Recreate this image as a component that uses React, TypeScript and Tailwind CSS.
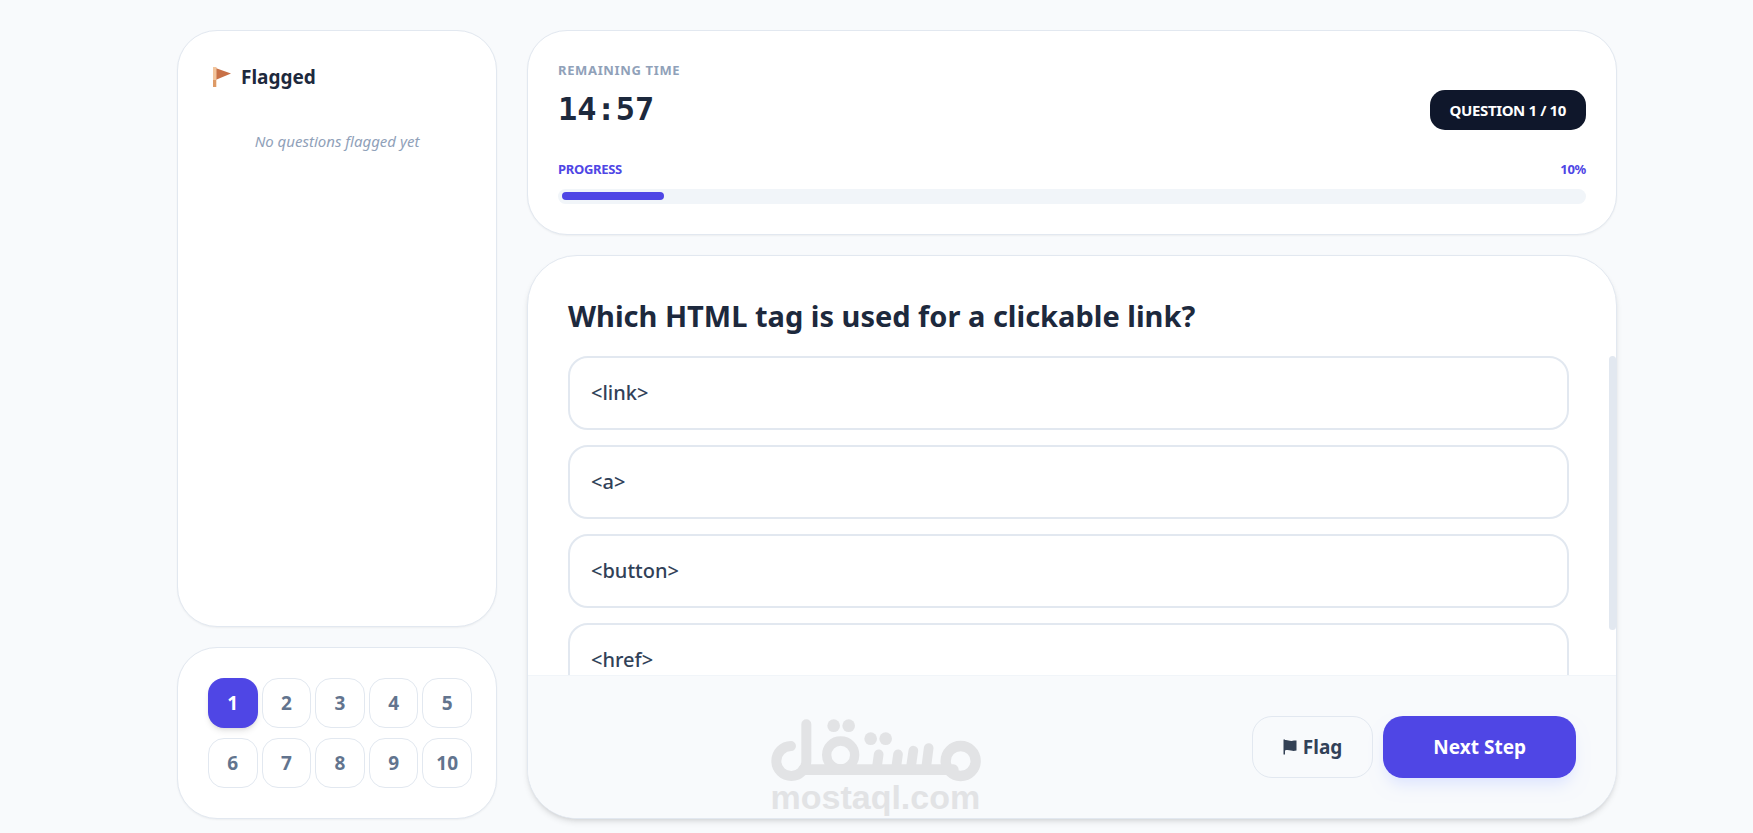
import React, { useState } from 'react';

const options = ['<link>', '<a>', '<button>', '<href>'];
const questionNumbers = [1, 2, 3, 4, 5, 6, 7, 8, 9, 10];

const PennantIcon = () => (
  <svg viewBox="0 0 20 22" className="h-[22px] w-5" aria-hidden="true">
    <path d="M3.5 2 L19 7.5 L3.5 14 Z" fill="#c87147" />
    <rect x="1" y="1" width="3.5" height="20" fill="#f2c49b" />
    <rect x="1" y="14" width="3" height="7" fill="#dd9a66" />
  </svg>
);

const FlagIcon = () => (
  <svg viewBox="0 0 14 16" className="h-4 w-3.5" aria-hidden="true">
    <path d="M0.5 0.5 H2 V1 C4.5 0.6 6 2 8.5 1.9 C10.5 1.8 11.5 1.6 13.5 1.6 V11.5 C11.5 12 10 12 8 11.6 C6 11.2 4.5 10.8 2 11.4 V15.5 H0.5 Z" fill="#334155" />
  </svg>
);

const Watermark = () => (
  <div className="pointer-events-none absolute bottom-[21px] left-1/2 flex w-[212px] -translate-x-1/2 flex-col text-[#e2e3e5]">
    <svg viewBox="93 86 630 189" className="h-[63px] w-[210px]" fill="none" stroke="currentColor" strokeLinecap="round" role="img" aria-label="مستقل">
      <path d="M153 167 A45 45 0 1 0 199 212 V102" strokeWidth="30" />
      <path d="M190 238 H640" strokeWidth="32" />
      <circle cx="302" cy="194" r="42" strokeWidth="28" />
      <circle cx="662" cy="212" r="45" strokeWidth="31" />
      <path d="M416 192 L410 236 M474 192 L468 236 M520 181 L512 236 M566 173 L558 236" strokeWidth="29" />
      <g fill="currentColor" stroke="none">
        <circle cx="281" cy="106" r="19" />
        <circle cx="326" cy="106" r="19" />
        <circle cx="392" cy="145" r="19" />
        <circle cx="437" cy="145" r="19" />
      </g>
    </svg>
    <span className="font-['Liberation_Sans',sans-serif] text-[34px] leading-[30px] font-bold">mostaql.com</span>
  </div>
);

const App = () => {
  const [current, setCurrent] = useState(1);
  const progress = current * 10;

  return (
    <div className="relative h-screen overflow-hidden bg-slate-50 pt-[30px] pr-4 pb-3.5 pl-[57px] font-['Noto_Sans',sans-serif] text-slate-800">
      <div className="mx-auto flex h-full max-w-[1440px] gap-[30px]">
        {/* Sidebar */}
        <aside className="flex w-80 shrink-0 flex-col gap-5">
          <section className="flex-1 rounded-[40px] border border-slate-200 bg-white p-[30px] shadow-xs">
            <h2 className="flex items-center gap-[9px] pl-1 text-[19px] leading-8 font-bold">
              <PennantIcon />
              Flagged
            </h2>
            <p className="mt-[38px] text-center text-[15px] leading-5 text-slate-400 italic">No questions flagged yet</p>
          </section>

          <nav className="grid grid-cols-5 gap-x-1 gap-y-2.5 rounded-[40px] border border-slate-200 bg-white py-[30px] pr-6 pl-[30px] shadow-xs">
            {questionNumbers.map((n) => (
              <button
                key={n}
                type="button"
                onClick={() => setCurrent(n)}
                className={
                  n === current
                    ? 'h-[50px] rounded-2xl bg-[#4f46e5] text-[19px] font-bold text-white shadow-md'
                    : 'h-[50px] rounded-2xl border border-slate-200 bg-white text-[19px] font-bold text-slate-500'
                }
              >
                {n}
              </button>
            ))}
          </nav>
        </aside>

        <main className="flex min-w-0 flex-1 flex-col gap-5">
          {/* Timer and progress */}
          <section className="rounded-[40px] border border-slate-200 bg-white p-[30px] shadow-xs">
            <div className="flex items-end justify-between">
              <div>
                <p className="text-[13px] leading-[18px] font-bold tracking-wider text-slate-400">REMAINING TIME</p>
                <p className="mt-0.5 font-['DejaVu_Sans_Mono',monospace] text-[32px] leading-[56px] font-bold">14:57</p>
              </div>
              <span className="mb-[7px] rounded-[15px] bg-slate-900 px-5 py-2 text-[15px] leading-6 font-bold tracking-tight text-white">
                QUESTION {current} / 10
              </span>
            </div>
            <div className="mt-[22px] flex justify-between text-[13px] leading-5 font-bold tracking-tight text-[#4f46e5]">
              <span>PROGRESS</span>
              <span>{progress}%</span>
            </div>
            <div className="mt-2.5 h-[15px] rounded-full bg-slate-100 px-1 py-[3px]">
              <div className="h-2 rounded-full bg-[#4f46e5]" style={{ width: `${progress}%` }} />
            </div>
          </section>

          {/* Question */}
          <section className="flex min-h-0 flex-1 flex-col overflow-hidden rounded-[50px] border border-slate-200 bg-white shadow-md">
            <h1 className="px-10 pt-10 pb-5 text-[29px] leading-10 font-bold">
              Which HTML tag is used for a clickable link?
            </h1>
            <div className="flex min-h-0 flex-1">
              <div className="flex flex-1 flex-col gap-[15px] overflow-y-auto pr-10 pl-10 [scrollbar-width:none]">
                {options.map((option) => (
                  <button
                    key={option}
                    type="button"
                    className="h-[74px] shrink-0 rounded-[20px] border-2 border-slate-200 bg-white px-[21px] text-left text-[20px] font-medium text-slate-700"
                  >
                    {option}
                  </button>
                ))}
              </div>
              <div className="h-[86%] w-[7px] rounded-full bg-slate-200" />
            </div>
            <footer className="flex justify-end gap-2.5 border-t border-slate-100 bg-slate-50 p-10">
              <button
                type="button"
                className="flex h-[62px] items-center gap-1.5 rounded-[20px] border border-slate-200 px-[30px] text-[19px] font-bold text-slate-700"
              >
                <FlagIcon />
                Flag
              </button>
              <button
                type="button"
                className="h-[62px] rounded-[20px] bg-[#4f46e5] px-[50px] text-[19px] font-bold text-white shadow-lg shadow-indigo-100"
              >
                Next Step
              </button>
            </footer>
          </section>
        </main>
      </div>
      <Watermark />
    </div>
  );
};

export default App;
